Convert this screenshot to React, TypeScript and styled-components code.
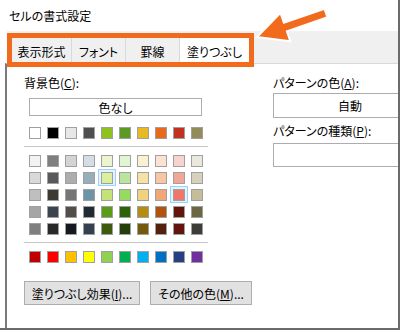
import React from 'react';
import styled, { createGlobalStyle, css } from 'styled-components';

const GlobalStyle = createGlobalStyle`
  html, body {
    margin: 0;
    padding: 0;
    background: #ffffff;
  }
  body {
    font-family: "Noto Sans CJK JP", "Noto Sans", sans-serif;
    font-feature-settings: "palt";
    color: #000000;
  }
`;

type Swatch = { c: string; dot?: string };

const TOP_ROW: Swatch[] = [
  { c: '#ffffff' }, { c: '#000000' }, { c: '#e7e7e7' }, { c: '#3a3a3a', dot: '#5a5a5a' },
  { c: '#8fc21f' }, { c: '#5c9a23' }, { c: '#e8b923' }, { c: '#e8681c' },
  { c: '#c2301e' }, { c: '#938b59' },
];

const GRID: Swatch[][] = [
  [{ c: '#f2f2f2' }, { c: '#7f7f7f' }, { c: '#d4d4d4' }, { c: '#d4dde4' }, { c: '#eaf5d0' },
   { c: '#e0f5d2' }, { c: '#f9f1d1' }, { c: '#fce1d5' }, { c: '#f8d2cd' }, { c: '#eae7dc' }],
  [{ c: '#d9d9d9' }, { c: '#595959' }, { c: '#adadad' }, { c: '#97afbb' }, { c: '#dcef9f' },
   { c: '#b8e59b' }, { c: '#f6e2a4' }, { c: '#f8c6a4' }, { c: '#f1a698' }, { c: '#d7d1bc' }],
  [{ c: '#bfbfbf' }, { c: '#3d3a33' }, { c: '#757575' }, { c: '#6a95a6' }, { c: '#c5e276' },
   { c: '#94db5e' }, { c: '#efd27f' }, { c: '#f0a678' }, { c: '#ee7767' }, { c: '#c5bc99' }],
  [{ c: '#a5a5a5' }, { c: '#222a35', dot: '#4a5260' }, { c: '#3a3734', dot: '#5e5a55' }, { c: '#222b34' }, { c: '#5b9b18' },
   { c: '#4b8e12', dot: '#1f4a05' }, { c: '#b38c12' }, { c: '#b1520e' }, { c: '#8c2214', dot: '#4a0e06' }, { c: '#6c6642' }],
  [{ c: '#7f7f7f' }, { c: '#0c0c0c', dot: '#3a3a3a' }, { c: '#161a20' }, { c: '#1d2430', dot: '#44505f' }, { c: '#3e5a0f' },
   { c: '#3a5b12', dot: '#1a2e05' }, { c: '#745a0c' }, { c: '#7b3618', dot: '#3e1508' }, { c: '#64140f' }, { c: '#3d3c37' }],
];

const STANDARD: Swatch[] = [
  { c: '#c00000' }, { c: '#ff0000' }, { c: '#ffc000' }, { c: '#ffff00' }, { c: '#92d050' },
  { c: '#00b050' }, { c: '#00b0f0' }, { c: '#0070c0' }, { c: '#002060', dot: '#3a5296' }, { c: '#7030a0' },
];

const SELECTED = ['1-4', '2-8'];

export default function App() {
  return (
    <>
      <GlobalStyle />
      <Window>
        <TitleBar>セルの書式設定</TitleBar>

        <TabStrip>
          <Highlight>
            <Tab $w={60}>表示形式</Tab>
            <Tab $w={54}>フォント</Tab>
            <Tab $w={54}>罫線</Tab>
            <Tab $w={69} $active>塗りつぶし</Tab>
          </Highlight>
        </TabStrip>

        <Panel>
          <LeftColumn>
            <Label>背景色(<u>C</u>):</Label>
            <NoColorBox>色なし</NoColorBox>

            <SwatchRow>
              {TOP_ROW.map((s, i) => (
                <Cell key={i}><Chip $color={s.c} $dot={s.dot} /></Cell>
              ))}
            </SwatchRow>

            <Divider />

            <SwatchGrid>
              {GRID.map((row, r) =>
                row.map((s, i) => (
                  <Cell key={`${r}-${i}`} $selected={SELECTED.includes(`${r}-${i}`)}>
                    <Chip $color={s.c} $dot={s.dot} />
                  </Cell>
                ))
              )}
            </SwatchGrid>

            <Divider />

            <SwatchRow>
              {STANDARD.map((s, i) => (
                <Cell key={i}><Chip $color={s.c} $dot={s.dot} /></Cell>
              ))}
            </SwatchRow>

            <ButtonRow>
              <Button $w={116}>塗りつぶし効果(<u>I</u>)...</Button>
              <Button $w={102}>その他の色(<u>M</u>)...</Button>
            </ButtonRow>
          </LeftColumn>

          <RightColumn>
            <Label>パターンの色(<u>A</u>):</Label>
            <SelectBox $h={25}>自動</SelectBox>
            <Label $gap={5}>パターンの種類(<u>P</u>):</Label>
            <SelectBox $h={24} $gap={4} />
          </RightColumn>
        </Panel>

        <Arrow width="400" height="80" viewBox="0 0 400 80">
          <polygon
            points="257,37 290.3,41.3 286.9,31.4 327.5,17.3 324.5,8.7 283.9,22.8 280.5,12.9"
            fill="#f26a1c"
            stroke="#ffffff"
            strokeWidth="2"
            strokeLinejoin="miter"
          />
        </Arrow>
      </Window>
    </>
  );
}

const Window = styled.div`
  position: relative;
  width: 400px;
  height: 330px;
  box-sizing: border-box;
  border-right: 2px solid #6b6b6b;
  border-bottom: 2px solid #6b6b6b;
  overflow: hidden;
  display: flex;
  flex-direction: column;
  background: #ffffff;
`;

const TitleBar = styled.div`
  height: 31px;
  padding-left: 9px;
  display: flex;
  align-items: center;
  font-size: 12px;
  flex-shrink: 0;
`;

const TabStrip = styled.div`
  height: 32px;
  margin-left: 7px;
  background: #f0f0f0;
  flex-shrink: 0;
`;

const Highlight = styled.div`
  position: relative;
  z-index: 1;
  margin-top: 2px;
  width: 247px;
  height: 34px;
  box-sizing: border-box;
  border: 5px solid #f26a1c;
  display: flex;
  background: #f0f0f0;
`;

const Tab = styled.div<{ $w: number; $active?: boolean }>`
  width: ${({ $w }) => $w}px;
  display: flex;
  align-items: center;
  justify-content: center;
  padding-top: 3px;
  box-sizing: border-box;
  font-size: 12px;
  background: ${({ $active }) => ($active ? '#ffffff' : '#f0f0f0')};
  border-right: ${({ $active }) => ($active ? 'none' : '1px solid #d9d9d9')};
`;

const Panel = styled.div`
  flex: 1;
  margin-left: 5px;
  border-left: 2px solid #7a7a7a;
  border-top: 1px solid #d9d9d9;
  padding: 11px 0 0 17px;
  display: grid;
  grid-template-columns: 249px 160px;
  align-items: start;
`;

const LeftColumn = styled.div`
  display: flex;
  flex-direction: column;
`;

const RightColumn = styled.div`
  display: flex;
  flex-direction: column;
`;

const Label = styled.div<{ $gap?: number }>`
  height: 16px;
  line-height: 16px;
  font-size: 12px;
  margin-top: ${({ $gap }) => $gap ?? 0}px;
  white-space: nowrap;

  u {
    text-underline-offset: 1px;
  }
`;

const NoColorBox = styled.div`
  margin: 7px 0 0 5px;
  width: 173px;
  height: 18px;
  box-sizing: border-box;
  border: 1px solid #adadad;
  display: flex;
  align-items: center;
  justify-content: center;
  font-size: 12px;
`;

const SwatchRow = styled.div`
  margin: 8px 0 0 2px;
  display: grid;
  grid-template-columns: repeat(10, 18px);
  grid-auto-rows: 17px;
`;

const SwatchGrid = styled(SwatchRow)`
  margin-top: 5px;
`;

const Divider = styled.div`
  margin-top: 5px;
  width: 184px;
  height: 1px;
  background: #c8c8c8;

  & + ${SwatchRow} {
    margin-top: 5px;
  }
`;

const Cell = styled.div<{ $selected?: boolean }>`
  box-sizing: border-box;
  padding: 2px 0 0 2px;
  border: 1px solid ${({ $selected }) => ($selected ? '#99d1ff' : 'transparent')};
  background: ${({ $selected }) => ($selected ? '#e5f3ff' : 'transparent')};
`;

const Chip = styled.div<{ $color: string; $dot?: string }>`
  width: 12px;
  height: 12px;
  box-sizing: border-box;
  border: 1px solid #a0a0a0;
  background-color: ${({ $color }) => $color};
  ${({ $dot }) =>
    $dot &&
    css`
      background-image: radial-gradient(${$dot} 0.6px, transparent 0.9px);
      background-size: 2px 2px;
    `}
`;

const ButtonRow = styled.div`
  margin-top: 16px;
  display: flex;
  gap: 10px;
`;

const Button = styled.div<{ $w: number }>`
  width: ${({ $w }) => $w}px;
  height: 24px;
  box-sizing: border-box;
  border: 1px solid #adadad;
  background: #e1e1e1;
  display: flex;
  align-items: center;
  justify-content: center;
  font-size: 12px;
  white-space: nowrap;
`;

const SelectBox = styled.div<{ $h: number; $gap?: number }>`
  margin-top: ${({ $gap }) => $gap ?? 2}px;
  width: 154px;
  height: ${({ $h }) => $h}px;
  box-sizing: border-box;
  border: 1px solid #adadad;
  display: flex;
  align-items: center;
  justify-content: center;
  font-size: 12px;
`;

const Arrow = styled.svg`
  position: absolute;
  left: 0;
  top: 0;
  z-index: 2;
  pointer-events: none;
`;
